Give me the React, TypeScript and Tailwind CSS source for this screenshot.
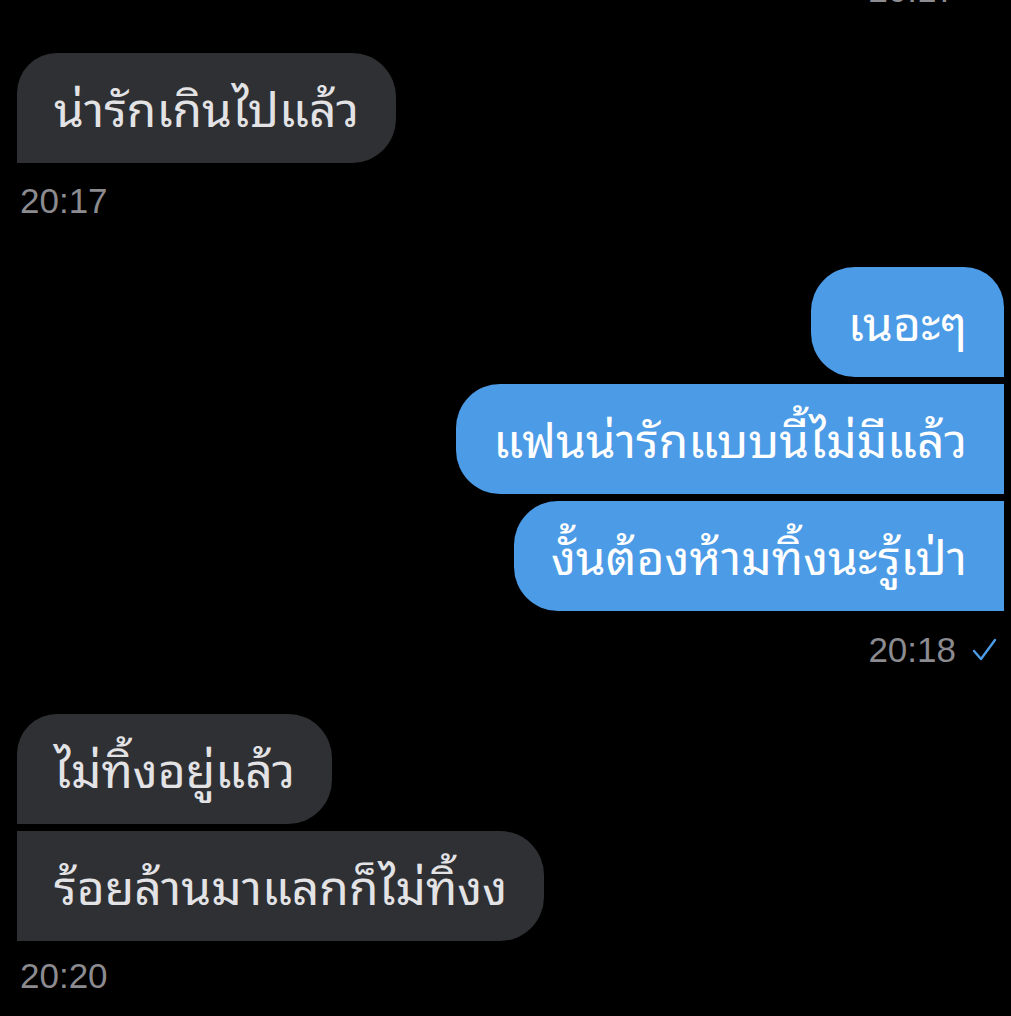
import React from 'react';

type Side = 'in' | 'out';

interface Message {
  text: string;
  rounded: string;
}

const thaiFont = {
  fontFamily: '"Noto Sans Thai Looped", "Noto Sans Thai", "Loma", "Garuda", "Noto Sans", "DejaVu Sans", sans-serif',
};

const timeFont = {
  fontFamily: '"Liberation Sans", Arial, sans-serif',
};

function Bubble({ side, msg }: { side: Side; msg: Message }) {
  const color =
    side === 'in' ? 'bg-[#2e3033] text-[#e3e3e6]' : 'bg-[#4c9be6] text-white';
  return (
    <div
      className={`h-[110px] flex items-center px-[37px] pb-[4px] text-[48px] leading-none whitespace-nowrap ${color} ${msg.rounded}`}
      style={thaiFont}
    >
      {msg.text}
    </div>
  );
}

function Check() {
  return (
    <svg width="26" height="24" viewBox="0 0 26 24" className="ml-[16px]">
      <polyline
        points="2,13 9,21 23,2"
        fill="none"
        stroke="#4c9be6"
        strokeWidth="2.4"
        strokeLinecap="round"
        strokeLinejoin="round"
      />
    </svg>
  );
}

function Stamp({ time, read, className }: { time: string; read?: boolean; className: string }) {
  return (
    <div className={`flex items-center text-[35px] leading-none text-[#8b8b90] ${className}`} style={timeFont}>
      <span>{time}</span>
      {read && <Check />}
    </div>
  );
}

const incomingA: Message[] = [
  { text: 'น่ารักเกินไปแล้ว', rounded: 'rounded-tl-[40px] rounded-r-[44px]' },
];

const outgoing: Message[] = [
  { text: 'เนอะๆ', rounded: 'rounded-l-[44px] rounded-tr-[40px]' },
  { text: 'แฟนน่ารักแบบนี้ไม่มีแล้ว', rounded: 'rounded-l-[44px]' },
  { text: 'งั้นต้องห้ามทิ้งนะรู้เป่า', rounded: 'rounded-l-[44px]' },
];

const incomingB: Message[] = [
  { text: 'ไม่ทิ้งอยู่แล้ว', rounded: 'rounded-tl-[40px] rounded-r-[44px]' },
  { text: 'ร้อยล้านมาแลกก็ไม่ทิ้งง', rounded: 'rounded-r-[44px]' },
];

export default function App() {
  return (
    <div className="w-full h-[1016px] bg-black overflow-hidden flex flex-col">
      {/* previous message's time, mostly scrolled out of view */}
      <Stamp time="20:17" className="self-end mr-[55px] -mt-[28px]" />

      <div className="mt-[46px] flex flex-col items-start gap-[7px] pl-[17px]">
        {incomingA.map((m) => (
          <Bubble key={m.text} side="in" msg={m} />
        ))}
      </div>
      <Stamp time="20:17" className="mt-[20px] ml-[20px]" />

      <div className="mt-[49px] flex flex-col items-end gap-[7px] pr-[7px]">
        {outgoing.map((m) => (
          <Bubble key={m.text} side="out" msg={m} />
        ))}
      </div>
      <Stamp time="20:18" read className="self-end mr-[13px] mt-[21px]" />

      <div className="mt-[47px] flex flex-col items-start gap-[7px] pl-[17px]">
        {incomingB.map((m) => (
          <Bubble key={m.text} side="in" msg={m} />
        ))}
      </div>
      <Stamp time="20:20" className="mt-[17px] ml-[20px]" />
    </div>
  );
}
